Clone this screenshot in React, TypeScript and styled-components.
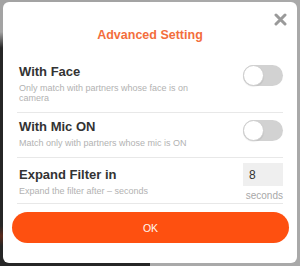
import React, { useState } from "react";
import styled, { createGlobalStyle } from "styled-components";

const Global = createGlobalStyle`
  html, body { margin: 0; padding: 0; }
  body { font-family: "Liberation Sans", Arial, sans-serif; }
`;

const Backdrop = styled.div`
  width: 300px;
  height: 266px;
  box-sizing: border-box;
  padding: 2px 3px 3px 3px;
  background:
    linear-gradient(90deg, transparent 0 150px, #a9a9a9 150px),
    linear-gradient(180deg, #a3a3a3 0 32px, #262626 48px, #262626 226px, #5a2a1c 236px, #262626 246px);
`;

const Modal = styled.div`
  position: relative;
  width: 294px;
  height: 261px;
  box-sizing: border-box;
  background: #ffffff;
  border-radius: 6px;
  padding: 25px 0 20px 0;
  display: flex;
  flex-direction: column;
`;

const Close = styled.button`
  position: absolute;
  top: 11px;
  right: 10px;
  width: 13px;
  height: 13px;
  padding: 0;
  border: 0;
  background: transparent;
  cursor: pointer;
  display: flex;
`;

const Title = styled.h2`
  margin: 0;
  flex-shrink: 0;
  text-align: center;
  font-size: 12.5px;
  line-height: 16px;
  font-weight: 700;
  color: #f36e3c;
`;

const List = styled.div`
  margin: 15px 14px 0 14px;
  flex-shrink: 0;
  display: flex;
  flex-direction: column;
`;

const Row = styled.div<{ $top: number; $bottom: number }>`
  display: grid;
  grid-template-columns: 1fr auto;
  column-gap: 8px;
  padding: ${(p) => p.$top}px 0 ${(p) => p.$bottom}px 2px;
  border-bottom: 1px solid #e8e8e8;
`;

const Heading = styled.div`
  grid-column: 1;
  grid-row: 1;
  font-size: 13px;
  line-height: 16px;
  font-weight: 700;
  color: #333333;
  align-self: center;
`;

const Hint = styled.div<{ $gap: number }>`
  grid-column: 1;
  grid-row: 2;
  margin-top: ${(p) => p.$gap}px;
  max-width: 188px;
  font-size: 9px;
  line-height: 10px;
  color: #b2b2b2;
`;

const Track = styled.button<{ $on: boolean }>`
  grid-column: 2;
  grid-row: 1 / span 2;
  align-self: start;
  margin-top: 1px;
  position: relative;
  width: 40px;
  height: 21px;
  padding: 0;
  border: 0;
  border-radius: 11px;
  background: ${(p) => (p.$on ? "#fe5110" : "#d2d2d2")};
  cursor: pointer;
`;

const Knob = styled.span<{ $on: boolean }>`
  position: absolute;
  top: 0;
  left: ${(p) => (p.$on ? "19px" : "0")};
  width: 21px;
  height: 21px;
  box-sizing: border-box;
  border-radius: 50%;
  background: #ffffff;
  border: 1px solid #cdcdcd;
  box-shadow: 0 1px 1px rgba(0, 0, 0, 0.08);
`;

const NumberBox = styled.div`
  grid-column: 2;
  grid-row: 1;
  width: 40px;
  height: 23px;
  box-sizing: border-box;
  padding-left: 6px;
  background: #efefef;
  display: flex;
  align-items: center;
  font-size: 12px;
  color: #333333;
`;

const Unit = styled.div`
  grid-column: 2;
  grid-row: 2;
  margin-top: 4px;
  text-align: right;
  font-size: 10px;
  line-height: 12px;
  color: #a8a8a8;
`;

const OkButton = styled.button`
  flex-shrink: 0;
  margin: 8px 8px 0 9px;
  height: 31px;
  border: 0;
  border-radius: 16px;
  background: #fe5010;
  color: #fff8f2;
  font-family: "Liberation Sans", Arial, sans-serif;
  font-size: 10.5px;
  cursor: pointer;
`;

function Toggle() {
  const [on, setOn] = useState(false);
  return (
    <Track $on={on} onClick={() => setOn(!on)} aria-pressed={on}>
      <Knob $on={on} />
    </Track>
  );
}

export default function App() {
  return (
    <>
      <Global />
      <Backdrop>
        <Modal>
          <Close aria-label="Close">
            <svg width="13" height="13" viewBox="0 0 13 13">
              <path d="M2 2 L11 11 M11 2 L2 11" stroke="#9a9a9a" strokeWidth="3" strokeLinecap="round" />
            </svg>
          </Close>
          <Title>Advanced Setting</Title>
          <List>
            <Row $top={6} $bottom={9}>
              <Heading>With Face</Heading>
              <Toggle />
              <Hint $gap={3}>Only match with partners whose face is on camera</Hint>
            </Row>
            <Row $top={6} $bottom={9}>
              <Heading>With Mic ON</Heading>
              <Toggle />
              <Hint $gap={3}>Match only with partners whose mic is ON</Hint>
            </Row>
            <Row $top={5} $bottom={1}>
              <Heading>Expand Filter in</Heading>
              <NumberBox>8</NumberBox>
              <Hint $gap={0}>Expand the filter after – seconds</Hint>
              <Unit>seconds</Unit>
            </Row>
          </List>
          <OkButton>OK</OkButton>
        </Modal>
      </Backdrop>
    </>
  );
}
